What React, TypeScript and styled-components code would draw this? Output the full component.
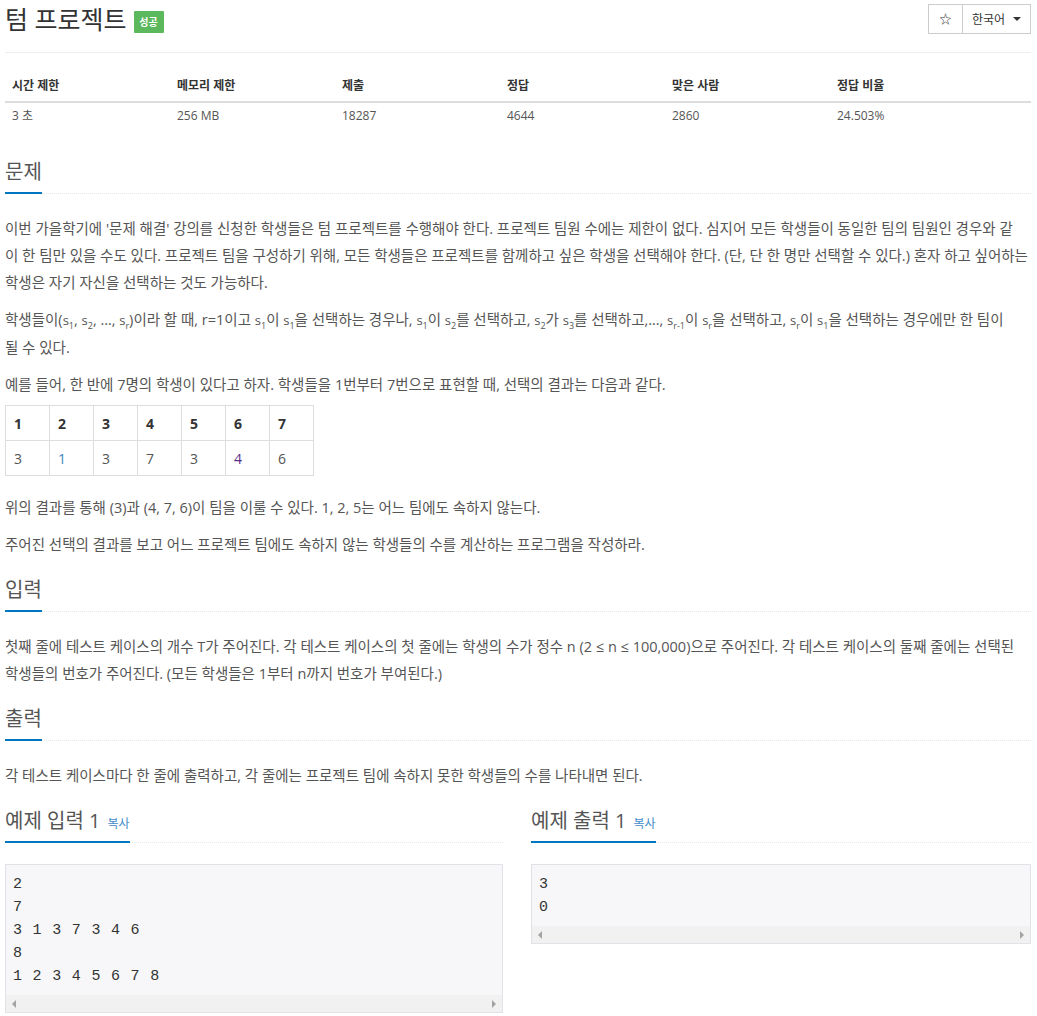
import styled, { createGlobalStyle } from 'styled-components'

const GlobalStyle = createGlobalStyle`
    html, body {
        margin: 0;
        padding: 0;
        background: #fff;
    }
    body {
        font-family: 'Open Sans', 'Noto Sans CJK KR', sans-serif;
        font-size: 14.5px;
        color: #555;
    }
`

const Page = styled.div`
    padding: 0 6px 0 5px;
`

const PageHeader = styled.div`
    display: flex;
    justify-content: space-between;
    align-items: flex-start;
    height: 52px;
    border-bottom: 1px solid #eee;
`

const Title = styled.h1`
    display: flex;
    align-items: center;
    gap: 7px;
    margin: 0;
    font-size: 25px;
    font-weight: 400;
    line-height: 38px;
    color: #333;
`

const Badge = styled.span`
    display: inline-flex;
    align-items: center;
    justify-content: center;
    width: 30px;
    height: 22px;
    margin-top: 6px;
    background: #5cb85c;
    color: #fff;
    font-size: 10px;
    font-weight: 700;
    border-radius: 1px;
`

const ButtonGroup = styled.div`
    display: flex;
    margin-top: 4px;
`

const Button = styled.button<{ $wide?: boolean }>`
    display: inline-flex;
    align-items: center;
    justify-content: center;
    gap: 8px;
    height: 30px;
    width: ${({ $wide }) => ($wide ? '69px' : '35px')};
    margin-left: ${({ $wide }) => ($wide ? '-1px' : '0')};
    padding: 0;
    border: 1px solid #ccc;
    background: #fff;
    color: #333;
    font-family: 'Open Sans', 'Noto Sans CJK KR', sans-serif;
    font-size: 12px;
`

const Caret = styled.span`
    width: 0;
    height: 0;
    border-left: 4px solid transparent;
    border-right: 4px solid transparent;
    border-top: 4px solid #333;
`

const StatsTable = styled.table`
    width: 100%;
    margin-top: 18px;
    border-collapse: collapse;
    table-layout: fixed;
    font-size: 12px;
`

const StatHead = styled.th<{ $w?: number }>`
    width: ${({ $w }) => ($w ? `${$w}px` : 'auto')};
    padding: 5px 7px;
    line-height: 20px;
    text-align: left;
    font-weight: 700;
    color: #333;
    border-bottom: 2px solid #ddd;
`

const StatCell = styled.td`
    padding: 3px 7px;
    line-height: 20px;
    font-size: 12px;
`

const Section = styled.section<{ $top: number }>`
    margin-top: ${({ $top }) => `${$top}px`};
`

const Headline = styled.div`
    border-bottom: 1px dotted #e4e9f0;
    margin-bottom: 21px;
`

const HeadTitle = styled.h2`
    display: inline-flex;
    align-items: baseline;
    height: 32px;
    margin: 0 0 -1px;
    padding-bottom: 4px;
    font-size: 20px;
    font-weight: 400;
    line-height: 32px;
    color: #555;
    border-bottom: 2px solid #0076c0;
`

const CopyLink = styled.span`
    margin-left: 7px;
    font-size: 12px;
    color: #428bca;
`

const Para = styled.p`
    margin: 0 0 10px;
    line-height: 27px;
`

const Var = styled.span`
    font-family: 'Open Sans', sans-serif;
    font-size: 13px;
`

const Sub = styled.sub`
    font-size: 9px;
    line-height: 0;
`

const SampleTable = styled.table`
    margin: -3px 0 18px;
    border-collapse: collapse;
`

const SampleCell = styled.td<{ $head?: boolean; $color?: string }>`
    width: 27px;
    height: 34px;
    padding: 0 8px;
    border: 1px solid #ddd;
    font-size: 14px;
    font-weight: ${({ $head }) => ($head ? 700 : 400)};
    color: ${({ $head, $color }) => $color ?? ($head ? '#333' : '#555')};
`

const Samples = styled.div`
    display: grid;
    grid-template-columns: 498px 1fr;
    column-gap: 28px;
    margin-top: 16px;
`

const Pre = styled.div`
    border: 1px solid #e1e1e8;
    background: #f7f7f9;
    color: #333;
`

const PreText = styled.pre`
    margin: 0;
    padding: 8px 7px 7px;
    font-family: 'Liberation Mono', monospace;
    font-size: 15px;
    letter-spacing: 0.8px;
    line-height: 23px;
`

const Scrollbar = styled.div`
    display: flex;
    justify-content: space-between;
    align-items: center;
    height: 17px;
    padding: 0 6px;
    background: #f1f1f1;
`

const Arrow = styled.span<{ $right?: boolean }>`
    width: 0;
    height: 0;
    border-top: 4px solid transparent;
    border-bottom: 4px solid transparent;
    ${({ $right }) =>
        $right ? 'border-left: 4px solid #a3a3a3;' : 'border-right: 4px solid #a3a3a3;'}
`

const S = ({ i }: { i?: string }): JSX.Element => (
    <Var>
        s{i && <Sub>{i}</Sub>}
    </Var>
)

const stats = [
    ['시간 제한', '3 초'],
    ['메모리 제한', '256 MB'],
    ['제출', '18287'],
    ['정답', '4644'],
    ['맞은 사람', '2860'],
    ['정답 비율', '24.503%'],
]

const choices = ['3', '1', '3', '7', '3', '4', '6']
const choiceColors: Record<number, string> = { 1: '#3a87c4', 5: '#5b2d86' }

const Sample = ({ title, text }: { title: string; text: string }): JSX.Element => (
    <div>
        <Headline>
            <HeadTitle>
                {title}
                <CopyLink>복사</CopyLink>
            </HeadTitle>
        </Headline>
        <Pre>
            <PreText>{text}</PreText>
            <Scrollbar>
                <Arrow />
                <Arrow $right />
            </Scrollbar>
        </Pre>
    </div>
)

export default function App(): JSX.Element {
    return (
        <Page>
            <GlobalStyle />
            <PageHeader>
                <Title>
                    텀 프로젝트
                    <Badge>성공</Badge>
                </Title>
                <ButtonGroup>
                    <Button type='button'>☆</Button>
                    <Button type='button' $wide>
                        한국어
                        <Caret />
                    </Button>
                </ButtonGroup>
            </PageHeader>

            <StatsTable>
                <thead>
                    <tr>
                        {stats.map(([label], i) => (
                            <StatHead key={label} $w={i < 5 ? 151 : undefined}>
                                {label}
                            </StatHead>
                        ))}
                    </tr>
                </thead>
                <tbody>
                    <tr>
                        {stats.map(([label, value]) => (
                            <StatCell key={label}>{value}</StatCell>
                        ))}
                    </tr>
                </tbody>
            </StatsTable>

            <Section $top={27}>
                <Headline>
                    <HeadTitle>문제</HeadTitle>
                </Headline>
                <Para>
                    이번 가을학기에 '문제 해결' 강의를 신청한 학생들은 텀 프로젝트를 수행해야 한다.
                    프로젝트 팀원 수에는 제한이 없다. 심지어 모든 학생들이 동일한 팀의 팀원인 경우와 같
                    <br />이 한 팀만 있을 수도 있다. 프로젝트 팀을 구성하기 위해, 모든 학생들은 프로젝트를
                    함께하고 싶은 학생을 선택해야 한다. (단, 단 한 명만 선택할 수 있다.) 혼자 하고
                    싶어하는
                    <br />
                    학생은 자기 자신을 선택하는 것도 가능하다.
                </Para>
                <Para>
                    학생들이(<S i='1' />, <S i='2' />, …, <S i='r' />)이라 할 때, r=1이고 <S i='1' />이{' '}
                    <S i='1' />을 선택하는 경우나, <S i='1' />이 <S i='2' />를 선택하고, <S i='2' />가{' '}
                    <S i='3' />를 선택하고,…, <S i='r-1' />이 <S i='r' />을 선택하고, <S i='r' />이{' '}
                    <S i='1' />을 선택하는 경우에만 한 팀이
                    <br />될 수 있다.
                </Para>
                <Para>
                    예를 들어, 한 반에 7명의 학생이 있다고 하자. 학생들을 1번부터 7번으로 표현할 때,
                    선택의 결과는 다음과 같다.
                </Para>
                <SampleTable>
                    <tbody>
                        <tr>
                            {choices.map((_, i) => (
                                <SampleCell key={i} $head>
                                    {i + 1}
                                </SampleCell>
                            ))}
                        </tr>
                        <tr>
                            {choices.map((c, i) => (
                                <SampleCell key={i} $color={choiceColors[i]}>
                                    {c}
                                </SampleCell>
                            ))}
                        </tr>
                    </tbody>
                </SampleTable>
                <Para>위의 결과를 통해 (3)과 (4, 7, 6)이 팀을 이룰 수 있다. 1, 2, 5는 어느 팀에도 속하지 않는다.</Para>
                <Para>주어진 선택의 결과를 보고 어느 프로젝트 팀에도 속하지 않는 학생들의 수를 계산하는 프로그램을 작성하라.</Para>
            </Section>

            <Section $top={16}>
                <Headline>
                    <HeadTitle>입력</HeadTitle>
                </Headline>
                <Para>
                    첫째 줄에 테스트 케이스의 개수 T가 주어진다. 각 테스트 케이스의 첫 줄에는 학생의 수가
                    정수 n (2 ≤ n ≤ 100,000)으로 주어진다. 각 테스트 케이스의 둘째 줄에는 선택된
                    <br />
                    학생들의 번호가 주어진다. (모든 학생들은 1부터 n까지 번호가 부여된다.)
                </Para>
            </Section>

            <Section $top={16}>
                <Headline>
                    <HeadTitle>출력</HeadTitle>
                </Headline>
                <Para>각 테스트 케이스마다 한 줄에 출력하고, 각 줄에는 프로젝트 팀에 속하지 못한 학생들의 수를 나타내면 된다.</Para>
            </Section>

            <Samples>
                <Sample title='예제 입력 1' text={'2\n7\n3 1 3 7 3 4 6\n8\n1 2 3 4 5 6 7 8'} />
                <Sample title='예제 출력 1' text={'3\n0'} />
            </Samples>
        </Page>
    )
}
